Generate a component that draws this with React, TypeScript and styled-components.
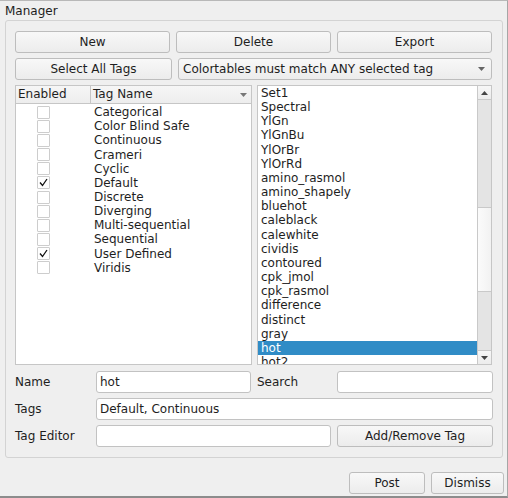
import React from "react";
import styled, { createGlobalStyle } from "styled-components";

const GlobalStyle = createGlobalStyle`
  html, body { margin: 0; padding: 0; background: #efefef; }
  body {
    font-family: "DejaVu Sans", "Liberation Sans", sans-serif;
    font-size: 12px;
    color: #1e1e1e;
  }
  * { box-sizing: border-box; }
`;

const ROW = 14.17;

const Window = styled.div`
  width: 508px;
  height: 498px;
  background: #efefef;
  border-top: 1px solid #b8b8b8;
  border-right: 1px solid #a6a6a6;
  border-bottom: 2px solid #8c8c8c;
  display: flex;
  flex-direction: column;
  overflow: hidden;
`;

const Title = styled.div`
  height: 14px;
  line-height: 14px;
  margin: 3px 0 2px 5px;
  white-space: nowrap;
`;

const Group = styled.div`
  margin: 0 4px 0 5px;
  border: 1px solid #d3d3d3;
  border-radius: 3px;
  padding: 10px 10px 10px 9px;
  display: flex;
  flex-direction: column;
`;

const ButtonRow = styled.div`
  display: grid;
  grid-template-columns: 1fr 1fr 1fr;
  column-gap: 6px;
  margin-bottom: 5px;
`;

const Button = styled.button<{ $width?: number }>`
  height: 22px;
  ${(p) => (p.$width ? `width: ${p.$width}px;` : "")}
  border: 1px solid #bdbdbd;
  border-radius: 3px;
  background: linear-gradient(#f8f8f8, #ececec);
  font: inherit;
  color: #1e1e1e;
  padding: 0 6px;
  line-height: 20px;
  white-space: nowrap;
`;

const ComboRow = styled.div`
  display: grid;
  grid-template-columns: 1fr 2fr;
  column-gap: 6px;
  margin-bottom: 5px;
`;

const Combo = styled.div`
  height: 22px;
  border: 1px solid #bdbdbd;
  border-radius: 3px;
  background: linear-gradient(#f8f8f8, #ececec);
  display: flex;
  align-items: center;
  justify-content: space-between;
  padding: 0 6px 0 4px;
  white-space: nowrap;
`;

const Lists = styled.div`
  display: grid;
  grid-template-columns: 237px 1fr;
  column-gap: 5px;
  height: 280px;
  margin-bottom: 5px;
`;

const Table = styled.div`
  border: 1px solid #c6c6c6;
  background: #ffffff;
  display: flex;
  flex-direction: column;
  overflow: hidden;
`;

const Header = styled.div`
  display: grid;
  grid-template-columns: 75px 1fr;
  height: 18px;
  background: linear-gradient(#f6f6f6, #ededed);
  border-bottom: 1px solid #c6c6c6;
  flex-shrink: 0;
`;

const HeaderCell = styled.div<{ $divider?: boolean }>`
  display: flex;
  align-items: center;
  justify-content: space-between;
  padding: 0 4px 0 2px;
  border-right: ${(p) => (p.$divider ? "1px solid #c6c6c6" : "none")};
  line-height: 17px;
  white-space: nowrap;
`;

const TagRows = styled.div`
  padding-top: 1px;
`;

const TagRow = styled.div`
  display: grid;
  grid-template-columns: 75px 1fr;
  height: ${ROW}px;
  align-items: center;
`;

const CheckCell = styled.div`
  padding-left: 21px;
  display: flex;
  align-items: center;
`;

const Box = styled.div`
  width: 13px;
  height: 13px;
  border: 1px solid #cdcdcd;
  border-radius: 1px;
  background: #ffffff;
  display: flex;
  align-items: center;
  justify-content: center;
`;

const TagName = styled.div`
  padding-left: 3px;
  line-height: 14px;
  white-space: nowrap;
`;

const ListBox = styled.div`
  border: 1px solid #c6c6c6;
  background: #ffffff;
  display: flex;
  overflow: hidden;
`;

const Items = styled.div`
  flex: 1;
  overflow: hidden;
`;

const Item = styled.div<{ $selected?: boolean }>`
  height: ${ROW}px;
  line-height: ${ROW}px;
  padding-left: 3px;
  white-space: nowrap;
  background: ${(p) => (p.$selected ? "#308cc6" : "transparent")};
  color: ${(p) => (p.$selected ? "#ffffff" : "inherit")};
`;

const ScrollBar = styled.div`
  width: 14px;
  border-left: 1px solid #c9c9c9;
  background: #e4e4e4;
  display: flex;
  flex-direction: column;
`;

const ScrollArrow = styled.div<{ $bottom?: boolean }>`
  height: 14px;
  background: linear-gradient(#f7f7f7, #ececec);
  ${(p) =>
    p.$bottom ? "border-top: 1px solid #c9c9c9;" : "border-bottom: 1px solid #c9c9c9;"}
  display: flex;
  align-items: center;
  justify-content: center;
  flex-shrink: 0;
`;

const Track = styled.div<{ $grow?: boolean }>`
  ${(p) => (p.$grow ? "flex: 1;" : "")}
`;

const Handle = styled.div`
  height: 85px;
  background: linear-gradient(90deg, #fbfbfb, #f2f2f2);
  border-top: 1px solid #c9c9c9;
  border-bottom: 1px solid #c9c9c9;
`;

const Form = styled.div`
  display: grid;
  grid-template-columns: 75px 155px 74px 156px;
  column-gap: 6px;
  grid-auto-rows: 22px;
  row-gap: 5px;
  margin-top: 1px;
`;

const Label = styled.div`
  display: flex;
  align-items: center;
  white-space: nowrap;
`;

const Input = styled.div<{ $span?: number }>`
  grid-column: span ${(p) => p.$span ?? 1};
  height: 22px;
  border: 1px solid #c2c2c2;
  border-radius: 3px;
  background: #ffffff;
  padding: 0 3px;
  line-height: 20px;
  white-space: nowrap;
`;

const Footer = styled.div`
  display: flex;
  justify-content: flex-end;
  gap: 6px;
  padding: 14px 3px 0 0;
`;

const Triangle = ({ up = false, color = "#555" }: { up?: boolean; color?: string }) => (
  <svg width="7" height="4" viewBox="0 0 7 4">
    <polygon points={up ? "0,4 7,4 3.5,0" : "0,0 7,0 3.5,4"} fill={color} />
  </svg>
);

const Check = () => (
  <svg width="9" height="9" viewBox="0 0 9 9">
    <polyline points="1,4.5 3.5,7.5 8,1" fill="none" stroke="#111" strokeWidth="1.3" />
  </svg>
);

const tags: [string, boolean][] = [
  ["Categorical", false],
  ["Color Blind Safe", false],
  ["Continuous", false],
  ["Crameri", false],
  ["Cyclic", false],
  ["Default", true],
  ["Discrete", false],
  ["Diverging", false],
  ["Multi-sequential", false],
  ["Sequential", false],
  ["User Defined", true],
  ["Viridis", false],
];

const tables = [
  "Set1", "Spectral", "YlGn", "YlGnBu", "YlOrBr", "YlOrRd", "amino_rasmol",
  "amino_shapely", "bluehot", "caleblack", "calewhite", "cividis", "contoured",
  "cpk_jmol", "cpk_rasmol", "difference", "distinct", "gray", "hot", "hot2",
];

export default function App() {
  return (
    <>
      <GlobalStyle />
      <Window>
        <Title>Manager</Title>
        <Group>
          <ButtonRow>
            <Button>New</Button>
            <Button>Delete</Button>
            <Button>Export</Button>
          </ButtonRow>
          <ComboRow>
            <Button>Select All Tags</Button>
            <Combo>
              <span>Colortables must match ANY selected tag</span>
              <Triangle color="#666" />
            </Combo>
          </ComboRow>
          <Lists>
            <Table>
              <Header>
                <HeaderCell $divider>Enabled</HeaderCell>
                <HeaderCell>
                  <span>Tag Name</span>
                  <Triangle color="#777" />
                </HeaderCell>
              </Header>
              <TagRows>
                {tags.map(([name, on]) => (
                  <TagRow key={name}>
                    <CheckCell>
                      <Box>{on && <Check />}</Box>
                    </CheckCell>
                    <TagName>{name}</TagName>
                  </TagRow>
                ))}
              </TagRows>
            </Table>
            <ListBox>
              <Items>
                {tables.map((t) => (
                  <Item key={t} $selected={t === "hot"}>
                    {t}
                  </Item>
                ))}
              </Items>
              <ScrollBar>
                <ScrollArrow>
                  <Triangle up color="#444" />
                </ScrollArrow>
                <Track style={{ height: 107 }} />
                <Handle />
                <Track $grow />
                <ScrollArrow $bottom>
                  <Triangle color="#444" />
                </ScrollArrow>
              </ScrollBar>
            </ListBox>
          </Lists>
          <Form>
            <Label>Name</Label>
            <Input>hot</Input>
            <Label>Search</Label>
            <Input />
            <Label>Tags</Label>
            <Input $span={3}>Default, Continuous</Input>
            <Label>Tag Editor</Label>
            <Input $span={2} />
            <Button>Add/Remove Tag</Button>
          </Form>
        </Group>
        <Footer>
          <Button $width={76}>Post</Button>
          <Button $width={73}>Dismiss</Button>
        </Footer>
      </Window>
    </>
  );
}
